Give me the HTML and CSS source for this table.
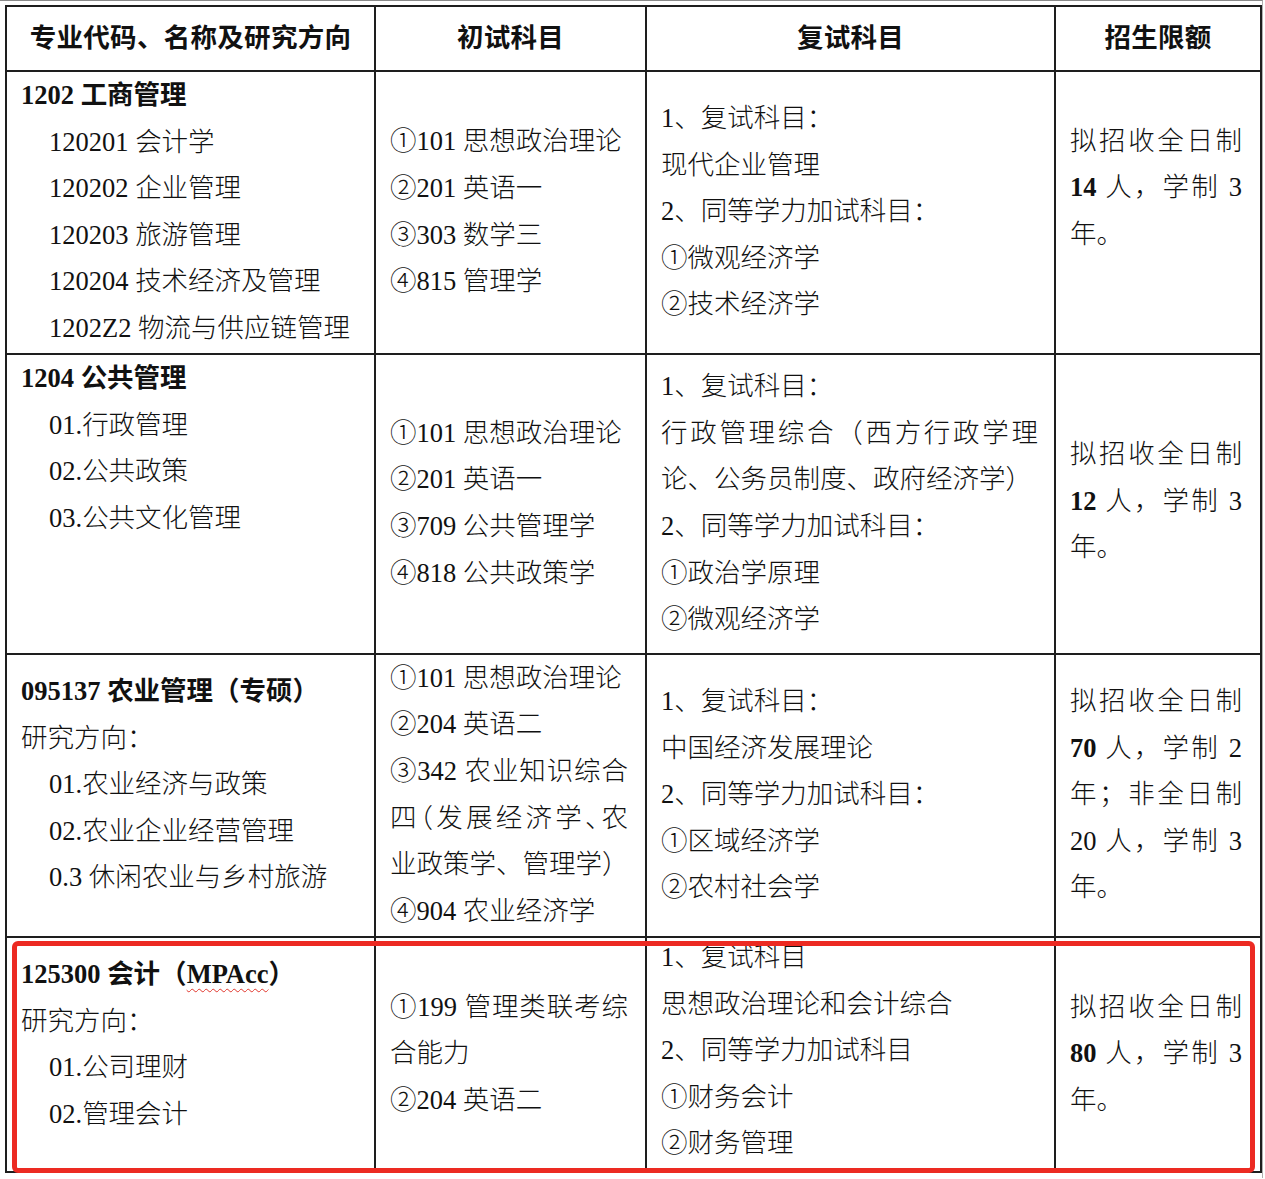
FILE: index.html
```html
<!DOCTYPE html>
<html lang="zh-CN">
<head>
<meta charset="utf-8">
<title>招生专业目录</title>
<link rel="stylesheet" href="styles.css">
</head>
<body>
<div class="page">
  <table class="catalog">
    <colgroup>
      <col class="c1"><col class="c2"><col class="c3"><col class="c4">
    </colgroup>
    <thead>
      <tr class="head">
        <th>专业代码、名称及研究方向</th>
        <th>初试科目</th>
        <th>复试科目</th>
        <th>招生限额</th>
      </tr>
    </thead>
    <tbody>
      <tr class="r1">
        <td class="major">
          <div class="title">1202 工商管理</div>
          <div class="sub">120201 会计学</div>
          <div class="sub">120202 企业管理</div>
          <div class="sub">120203 旅游管理</div>
          <div class="sub">120204 技术经济及管理</div>
          <div class="sub">1202Z2 物流与供应链管理</div>
        </td>
        <td class="exam"><div class="box">
          <div>①101 思想政治理论</div>
          <div>②201 英语一</div>
          <div>③303 数学三</div>
          <div>④815 管理学</div>
        </div></td>
        <td class="retest"><div class="box">
          <div>1、复试科目：</div>
          <div>现代企业管理</div>
          <div>2、同等学力加试科目：</div>
          <div>①微观经济学</div>
          <div>②技术经济学</div>
        </div></td>
        <td class="quota"><div class="box box-high">
          <div class="jl">拟招收全日制</div>
          <div class="jl"><b>14</b> 人，学制 3</div>
          <div>年。</div>
        </div></td>
      </tr>
      <tr class="r2">
        <td class="major">
          <div class="title">1204 公共管理</div>
          <div class="sub">01.行政管理</div>
          <div class="sub">02.公共政策</div>
          <div class="sub">03.公共文化管理</div>
        </td>
        <td class="exam"><div class="box">
          <div>①101 思想政治理论</div>
          <div>②201 英语一</div>
          <div>③709 公共管理学</div>
          <div>④818 公共政策学</div>
        </div></td>
        <td class="retest"><div class="box">
          <div>1、复试科目：</div>
          <div class="jl">行政管理综合（西方行政学理</div>
          <div>论、公务员制度、政府经济学）</div>
          <div>2、同等学力加试科目：</div>
          <div>①政治学原理</div>
          <div>②微观经济学</div>
        </div></td>
        <td class="quota"><div class="box box-up">
          <div class="jl">拟招收全日制</div>
          <div class="jl"><b>12</b> 人，学制 3</div>
          <div>年。</div>
        </div></td>
      </tr>
      <tr class="r3">
        <td class="major major-pad">
          <div class="title">095137 农业管理（专硕）</div>
          <div>研究方向：</div>
          <div class="sub">01.农业经济与政策</div>
          <div class="sub">02.农业企业经营管理</div>
          <div class="sub">0.3 休闲农业与乡村旅游</div>
        </td>
        <td class="exam"><div class="box">
          <div>①101 思想政治理论</div>
          <div>②204 英语二</div>
          <div class="jl">③342 农业知识综合</div>
          <div class="jl">四<span class="half">（</span>发展经济学<span class="half">、</span>农</div>
          <div class="jl">业政策学、管理学）</div>
          <div>④904 农业经济学</div>
        </div></td>
        <td class="retest"><div class="box">
          <div>1、复试科目：</div>
          <div>中国经济发展理论</div>
          <div>2、同等学力加试科目：</div>
          <div>①区域经济学</div>
          <div>②农村社会学</div>
        </div></td>
        <td class="quota"><div class="box">
          <div class="jl">拟招收全日制</div>
          <div class="jl"><b>70</b> 人，学制 2</div>
          <div class="jl">年；非全日制</div>
          <div class="jl">20 人，学制 3</div>
          <div>年。</div>
        </div></td>
      </tr>
      <tr class="r4">
        <td class="major major-pad">
          <div class="title">125300 会计（<span class="spell">MPAcc</span>）</div>
          <div>研究方向：</div>
          <div class="sub">01.公司理财</div>
          <div class="sub">02.管理会计</div>
        </td>
        <td class="exam"><div class="box">
          <div class="jl">①199 管理类联考综</div>
          <div>合能力</div>
          <div>②204 英语二</div>
        </div></td>
        <td class="retest"><div class="box box-tight">
          <div>1、复试科目</div>
          <div>思想政治理论和会计综合</div>
          <div>2、同等学力加试科目</div>
          <div>①财务会计</div>
          <div>②财务管理</div>
        </div></td>
        <td class="quota"><div class="box">
          <div class="jl">拟招收全日制</div>
          <div class="jl"><b>80</b> 人，学制 3</div>
          <div>年。</div>
        </div></td>
      </tr>
    </tbody>
  </table>
  <div class="highlight"></div>
</div>
</body>
</html>
```

FILE: styles.css
```css
html, body {
  margin: 0;
  padding: 0;
  background: #ffffff;
}

body {
  font-family: "Liberation Serif", "Noto Sans CJK SC", serif;
  font-size: 26.5px;
  color: #111111;
}

.page {
  position: relative;
  width: 1263px;
  height: 1178px;
  box-sizing: border-box;
  border-top: 1px solid #8a8a8a;
  border-right: 1px solid #b0b0b0;
  padding: 4px 0 0 5px;
}

.catalog {
  border-collapse: collapse;
  table-layout: fixed;
  width: 1255px;
  border: 2px solid #1e1e1e;
}

.c1 { width: 369px; }
.c2 { width: 271px; }
.c3 { width: 409px; }
.c4 { width: 206px; }

.catalog th,
.catalog td {
  border: 2px solid #1e1e1e;
  padding: 0 16px 0 14px;
  line-height: 46.6px;
  font-weight: 300;
}

.catalog th {
  font-family: "Noto Sans CJK SC", sans-serif;
  font-weight: 700;
  text-align: center;
  vertical-align: middle;
  padding: 0 4px 5px;
  letter-spacing: 0.3px;
}

.head { height: 65px; }
.r1 { height: 283px; }
.r2 { height: 300px; }
.r3 { height: 283px; }
.r4 { height: 235px; }

.catalog td.major {
  vertical-align: top;
  padding-top: 0;
}

.catalog td.major-pad {
  padding-top: 13px;
}

.title {
  font-weight: 700;
}

.sub {
  padding-left: 28px;
}

.catalog td.exam,
.catalog td.retest,
.catalog td.quota {
  vertical-align: middle;
}

.catalog td.exam {
  padding: 0 17px 0 14px;
}

.catalog td.quota {
  padding: 0 18px 0 14px;
}

.box {
  margin-top: -2px;
}

.box-high {
  margin-top: -50px;
}

.box-up {
  margin-top: -6px;
}

.box-tight {
  margin-top: -8px;
}

.jl {
  white-space: nowrap;
  text-align: justify;
  text-align-last: justify;
}

.half {
  font-feature-settings: "halt";
}

b {
  font-weight: 700;
}

.spell {
  text-decoration: underline wavy #e0362c;
  text-decoration-thickness: 1px;
  text-underline-offset: 5px;
}

.highlight {
  position: absolute;
  left: 12px;
  top: 940px;
  width: 1243px;
  height: 232px;
  box-sizing: border-box;
  border: 5px solid #ec2a22;
  border-radius: 6px;
  pointer-events: none;
}
```
